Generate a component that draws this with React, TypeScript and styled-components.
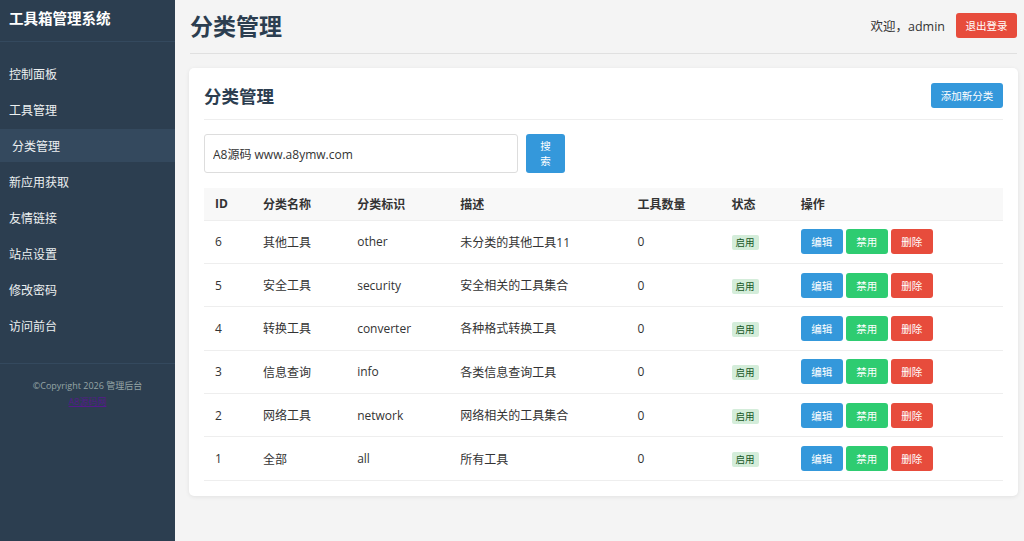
import styled, { createGlobalStyle } from "styled-components";

const GlobalStyle = createGlobalStyle`
  html, body {
    margin: 0;
    padding: 0;
    background: #f4f4f4;
    font-family: "Open Sans", "Noto Sans CJK SC", sans-serif;
    color: #333;
  }
  * { box-sizing: border-box; }
`;

const Layout = styled.div`
  display: flex;
  width: 1024px;
  height: 541px;
  overflow: hidden;
`;

const Sidebar = styled.aside`
  width: 175px;
  flex-shrink: 0;
  background: #2c3e50;
  color: #ecf0f1;
  display: flex;
  flex-direction: column;
`;

const Brand = styled.div`
  height: 42px;
  padding: 0 9px 6px;
  display: flex;
  align-items: center;
  font-size: 14.5px;
  font-weight: bold;
  color: #fff;
  border-bottom: 1px solid #34495e;
`;

const Nav = styled.nav`
  display: flex;
  flex-direction: column;
  gap: 3px;
  padding: 15px 0 21px;
  border-bottom: 1px solid #34495e;
`;

const NavItem = styled.a<{ $active?: boolean }>`
  height: 33px;
  display: flex;
  align-items: center;
  padding-left: ${(p) => (p.$active ? "12px" : "9px")};
  font-size: 12px;
  color: #ecf0f1;
  text-decoration: none;
  background: ${(p) => (p.$active ? "#34495e" : "transparent")};
`;

const SideFooter = styled.div`
  padding-top: 14px;
  text-align: center;
  font-size: 9px;
  line-height: 16px;
  color: #95a5a6;

  a {
    color: #551a8b;
    text-decoration: underline;
  }
`;

const Main = styled.main`
  flex: 1;
  padding: 0 7px 0 15px;
`;

const TopBar = styled.header`
  height: 54px;
  display: flex;
  align-items: center;
  justify-content: space-between;
  border-bottom: 1px solid #e0e0e0;
  padding-bottom: 3px;
`;

const PageTitle = styled.h1`
  margin: 0;
  font-size: 23px;
  font-weight: bold;
  color: #2c3e50;
`;

const UserBox = styled.div`
  display: flex;
  align-items: center;
  gap: 11px;
  font-size: 12.5px;
  color: #333;
`;

const Button = styled.button<{ $color: string; $w?: number }>`
  border: none;
  border-radius: 3px;
  background: ${(p) => p.$color};
  color: #fff;
  font-family: inherit;
  font-size: 10.5px;
  height: 25px;
  width: ${(p) => (p.$w ? `${p.$w}px` : "auto")};
  padding: 0 8px;
  cursor: pointer;
`;

const Card = styled.section`
  margin: 14px -1px 0 -1px;
  background: #fff;
  border-radius: 5px;
  box-shadow: 0 1px 4px rgba(0, 0, 0, 0.08);
  padding: 15px;
`;

const CardHeader = styled.div`
  height: 37px;
  display: flex;
  align-items: flex-start;
  justify-content: space-between;
  border-bottom: 1px solid #eee;
`;

const CardTitle = styled.h2`
  margin: 0;
  font-size: 17.5px;
  line-height: 27px;
  font-weight: bold;
  color: #2c3e50;
`;

const SearchRow = styled.form`
  display: flex;
  gap: 8px;
  margin: 14px 0 15px;
`;

const SearchInput = styled.input`
  width: 314px;
  height: 39px;
  border: 1px solid #ddd;
  border-radius: 3px;
  padding: 0 8px;
  font-family: inherit;
  font-size: 12px;
  color: #333;
`;

const SearchButton = styled.button`
  width: 39px;
  height: 39px;
  border: none;
  border-radius: 3px;
  background: #3498db;
  color: #fff;
  font-family: inherit;
  font-size: 10.5px;
  line-height: 15px;
  padding: 0 12px;
`;

const Table = styled.table`
  width: 100%;
  border-collapse: collapse;
  font-size: 12px;
  table-layout: fixed;
`;

const Th = styled.th<{ $w: number }>`
  width: ${(p) => p.$w}px;
  height: 32px;
  text-align: left;
  padding: 0 11px;
  background: #f8f8f8;
  font-weight: bold;
  color: #333;
  border-bottom: 1px solid #eee;
`;

const Td = styled.td`
  height: 43.4px;
  padding: 0 11px;
  border-bottom: 1px solid #eee;
  color: #333;
  white-space: nowrap;
`;

const Badge = styled.span`
  display: inline-block;
  padding: 0 4px;
  height: 15px;
  line-height: 15px;
  border-radius: 2px;
  background: #d4edda;
  color: #155724;
  font-size: 9.5px;
`;

const Actions = styled.div`
  display: flex;
  gap: 3px;
`;

const navItems = [
  "控制面板",
  "工具管理",
  "分类管理",
  "新应用获取",
  "友情链接",
  "站点设置",
  "修改密码",
  "访问前台",
];

const columns: [string, number][] = [
  ["ID", 48],
  ["分类名称", 94],
  ["分类标识", 103],
  ["描述", 177],
  ["工具数量", 94],
  ["状态", 69],
  ["操作", 213],
];

const rows = [
  { id: 6, name: "其他工具", slug: "other", desc: "未分类的其他工具11" },
  { id: 5, name: "安全工具", slug: "security", desc: "安全相关的工具集合" },
  { id: 4, name: "转换工具", slug: "converter", desc: "各种格式转换工具" },
  { id: 3, name: "信息查询", slug: "info", desc: "各类信息查询工具" },
  { id: 2, name: "网络工具", slug: "network", desc: "网络相关的工具集合" },
  { id: 1, name: "全部", slug: "all", desc: "所有工具" },
];

export default function App() {
  return (
    <>
      <GlobalStyle />
      <Layout>
        <Sidebar>
          <Brand>工具箱管理系统</Brand>
          <Nav>
            {navItems.map((item) => (
              <NavItem key={item} href="#" $active={item === "分类管理"}>
                {item}
              </NavItem>
            ))}
          </Nav>
          <SideFooter>
            <div>©Copyright 2026 管理后台</div>
            <a href="#">A8源码网</a>
          </SideFooter>
        </Sidebar>

        <Main>
          <TopBar>
            <PageTitle>分类管理</PageTitle>
            <UserBox>
              <span>欢迎，admin</span>
              <Button $color="#e74c3c" $w={61}>
                退出登录
              </Button>
            </UserBox>
          </TopBar>

          <Card>
            <CardHeader>
              <CardTitle>分类管理</CardTitle>
              <Button $color="#3498db" $w={72}>
                添加新分类
              </Button>
            </CardHeader>

            <SearchRow onSubmit={(e) => e.preventDefault()}>
              <SearchInput defaultValue="A8源码 www.a8ymw.com" />
              <SearchButton type="submit">搜索</SearchButton>
            </SearchRow>

            <Table>
              <thead>
                <tr>
                  {columns.map(([label, w]) => (
                    <Th key={label} $w={w}>
                      {label}
                    </Th>
                  ))}
                </tr>
              </thead>
              <tbody>
                {rows.map((row) => (
                  <tr key={row.id}>
                    <Td>{row.id}</Td>
                    <Td>{row.name}</Td>
                    <Td>{row.slug}</Td>
                    <Td>{row.desc}</Td>
                    <Td>0</Td>
                    <Td>
                      <Badge>启用</Badge>
                    </Td>
                    <Td>
                      <Actions>
                        <Button $color="#3498db" $w={42}>
                          编辑
                        </Button>
                        <Button $color="#2ecc71" $w={42}>
                          禁用
                        </Button>
                        <Button $color="#e74c3c" $w={42}>
                          删除
                        </Button>
                      </Actions>
                    </Td>
                  </tr>
                ))}
              </tbody>
            </Table>
          </Card>
        </Main>
      </Layout>
    </>
  );
}
